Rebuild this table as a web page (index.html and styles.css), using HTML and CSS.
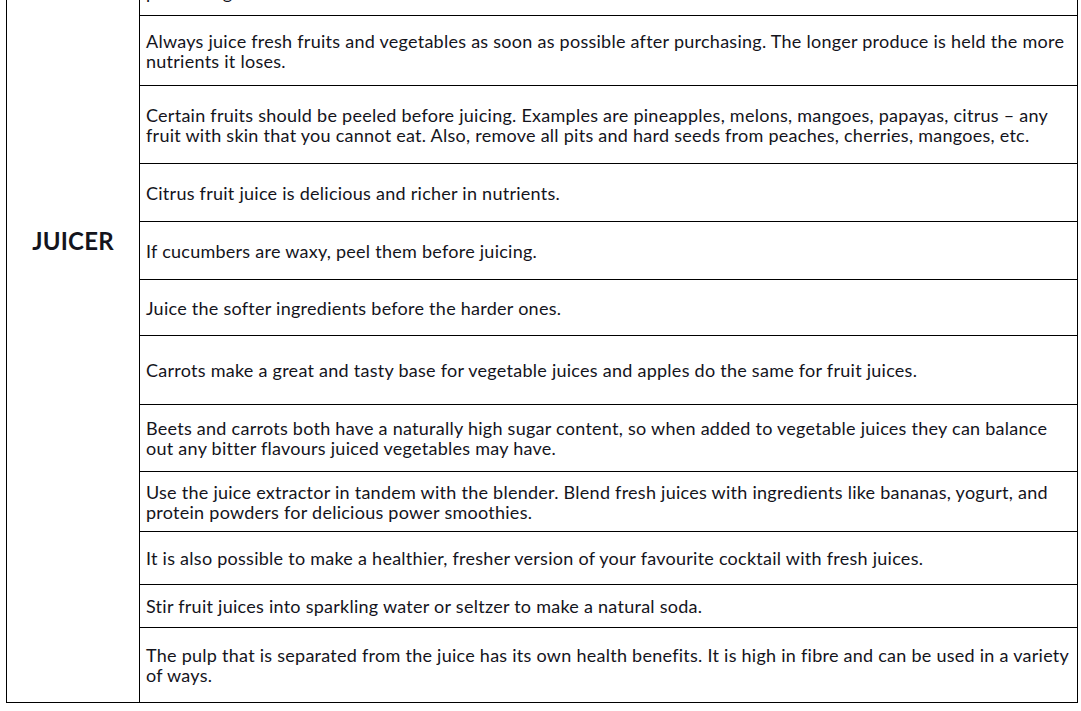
FILE: index.html
```html
<!DOCTYPE html>
<html>
<head>
<meta charset="utf-8">
<link rel="stylesheet" href="styles.css">
</head>
<body>
<div class="table">
  <div class="label">JUICER</div>
  <div class="cell">Before using your juicer for the first time, wash all the parts that come into contact with food.</div>
  <div class="cell">processing.</div>
  <div class="cell">Always juice fresh fruits and vegetables as soon as possible after purchasing. The longer produce is held the more nutrients it loses.</div>
  <div class="cell">Certain fruits should be peeled before juicing. Examples are pineapples, melons, mangoes, papayas, citrus – any fruit with skin that you cannot eat. Also, remove all pits and hard seeds from peaches, cherries, mangoes, etc.</div>
  <div class="cell">Citrus fruit juice is delicious and richer in nutrients.</div>
  <div class="cell">If cucumbers are waxy, peel them before juicing.</div>
  <div class="cell">Juice the softer ingredients before the harder ones.</div>
  <div class="cell">Carrots make a great and tasty base for vegetable juices and apples do the same for fruit juices.</div>
  <div class="cell">Beets and carrots both have a naturally high sugar content, so when added to vegetable juices they can balance out any bitter flavours juiced vegetables may have.</div>
  <div class="cell">Use the juice extractor in tandem with the blender. Blend fresh juices with ingredients like bananas, yogurt, and protein powders for delicious power smoothies.</div>
  <div class="cell">It is also possible to make a healthier, fresher version of your favourite cocktail with fresh juices.</div>
  <div class="cell">Stir fruit juices into sparkling water or seltzer to make a natural soda.</div>
  <div class="cell">The pulp that is separated from the juice has its own health benefits. It is high in fibre and can be used in a variety of ways.</div>
</div>
</body>
</html>
```

FILE: styles.css
```css
html, body {
  margin: 0;
  padding: 0;
  background: #ffffff;
  overflow: hidden;
}

.table {
  margin: -221px 0 0 6px;
  width: 1072px;
  box-sizing: border-box;
  border: 1px solid #000;
  display: grid;
  grid-template-columns: 133px 937px;
  grid-template-rows: 188px 47px 70px 78px 58px 58px 56px 69px 67px 60px 53px 43px 75px;
  font-family: "Lato", "Liberation Sans", sans-serif;
  color: #14141c;
}

.label {
  grid-column: 1;
  grid-row: 1 / span 13;
  border-right: 1px solid #000;
  display: flex;
  align-items: center;
  justify-content: center;
  padding-bottom: 2px;
  font-weight: 700;
  font-size: 24px;
  letter-spacing: 0.2px;
}

.cell {
  grid-column: 2;
  box-sizing: border-box;
  border-top: 1px solid #000;
  margin-left: -1px;
  padding: 0 1px 0 7px;
  display: flex;
  align-items: center;
  font-size: 18px;
  line-height: 20px;
  letter-spacing: 0.26px;
}

.cell:nth-child(2) {
  border-top: none;
}
```
